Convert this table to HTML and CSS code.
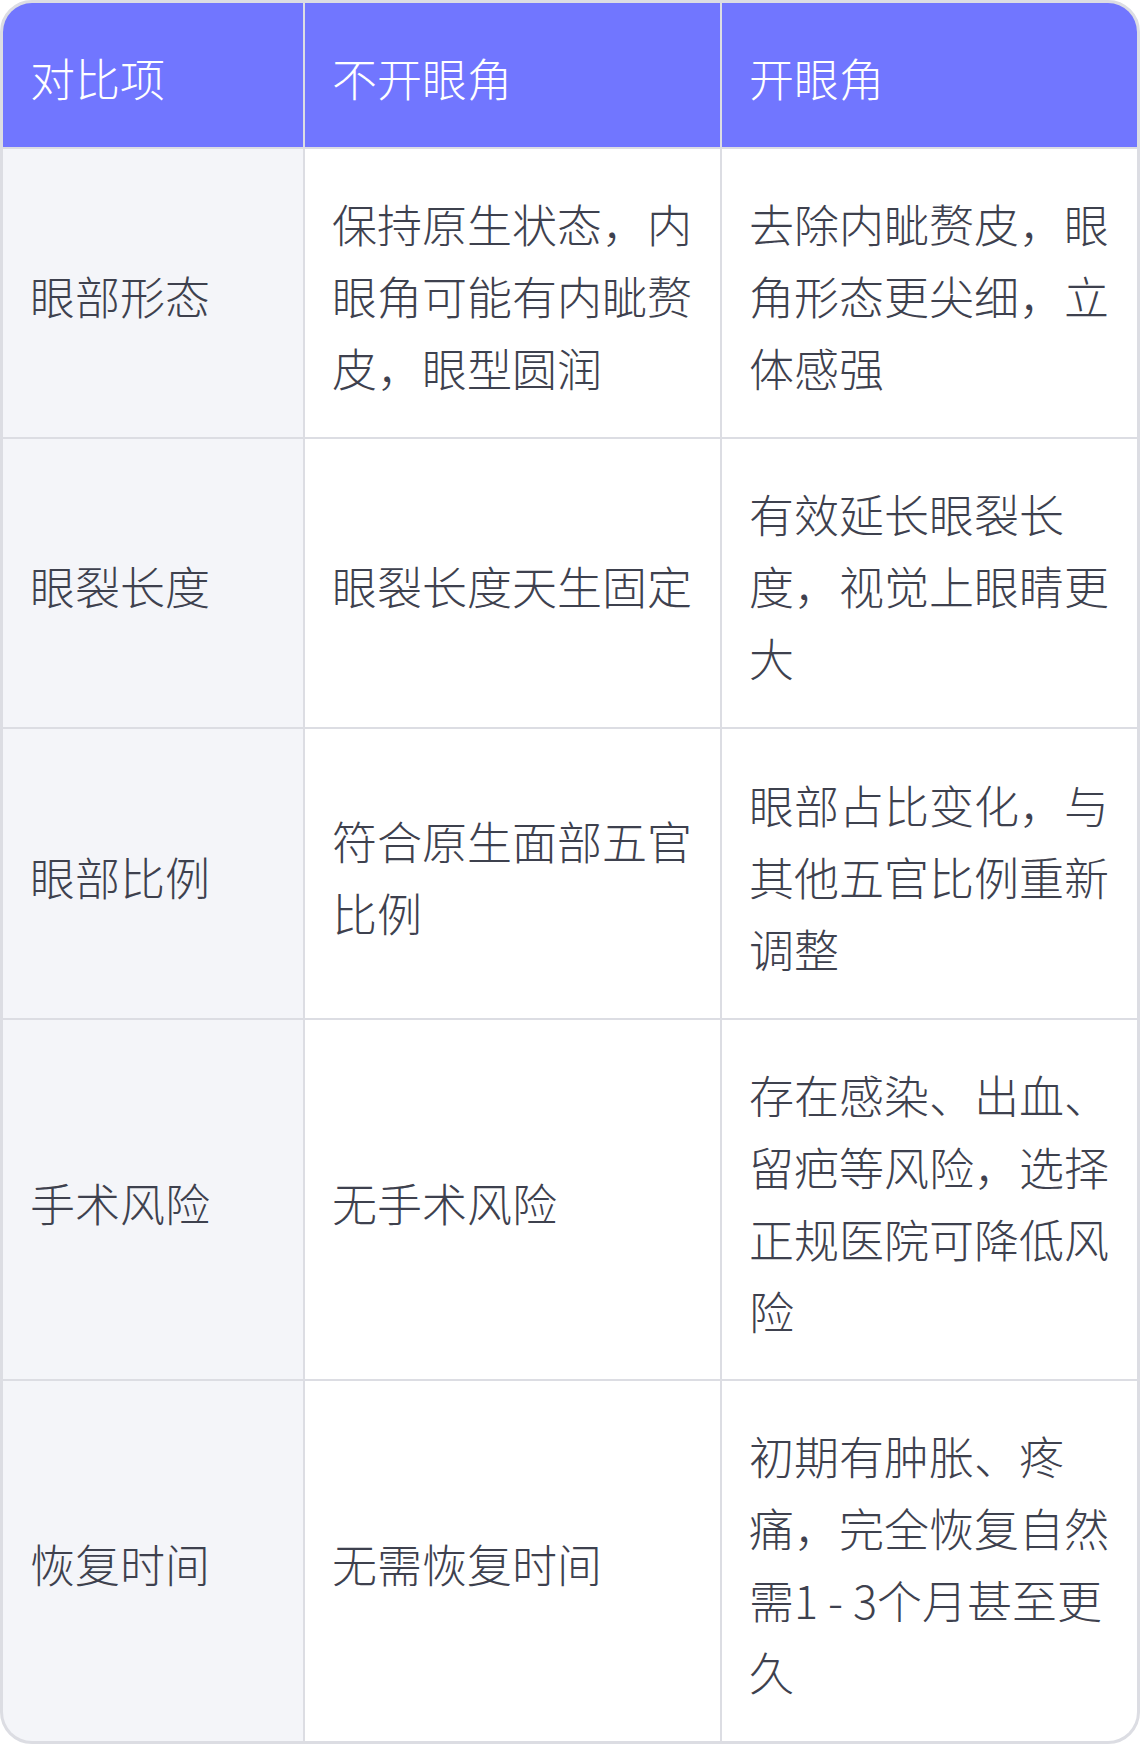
FILE: index.html
```html
<!DOCTYPE html>
<html lang="zh-CN">
<head>
<meta charset="utf-8">
<title>开眼角对比</title>
<link rel="stylesheet" href="styles.css">
</head>
<body>
<div class="table">
  <div class="cell head">对比项</div>
  <div class="cell head">不开眼角</div>
  <div class="cell head">开眼角</div>

  <div class="cell label">眼部形态</div>
  <div class="cell">保持原生状态，内眼角可能有内眦赘皮，眼型圆润</div>
  <div class="cell">去除内眦赘皮，眼角形态更尖细，立体感强</div>

  <div class="cell label">眼裂长度</div>
  <div class="cell">眼裂长度天生固定</div>
  <div class="cell">有效延长眼裂长度，视觉上眼睛更大</div>

  <div class="cell label">眼部比例</div>
  <div class="cell">符合原生面部五官比例</div>
  <div class="cell">眼部占比变化，与其他五官比例重新调整</div>

  <div class="cell label">手术风险</div>
  <div class="cell">无手术风险</div>
  <div class="cell">存在感染、出血、留疤等风险，选择正规医院可降低风险</div>

  <div class="cell label">恢复时间</div>
  <div class="cell">无需恢复时间</div>
  <div class="cell">初期有肿胀、疼痛，完全恢复自然需1 - 3个月甚至更久</div>
</div>
</body>
</html>
```

FILE: styles.css
```css
html, body {
  margin: 0;
  padding: 0;
  background: #ffffff;
}

body {
  font-family: "Noto Sans CJK SC", "Noto Sans", sans-serif;
}

.table {
  width: 1140px;
  height: 1744px;
  box-sizing: border-box;
  display: grid;
  grid-template-columns: 300px 415px 415px;
  grid-template-rows: 144px 288px 288px 289px 359px 360px;
  gap: 2px;
  background: #dcdde3;
  border: 3px solid #dcdde3;
  border-radius: 32px;
  overflow: hidden;
}

.cell {
  display: flex;
  align-items: center;
  box-sizing: border-box;
  padding: 6px 27px 0;
  background: #ffffff;
  color: #3e414e;
  font-size: 45px;
  font-weight: 300;
  line-height: 72px;
  word-break: break-all;
}

.head {
  background: #7176ff;
  color: #ffffff;
}

.label {
  background: #f4f5f9;
}
```
